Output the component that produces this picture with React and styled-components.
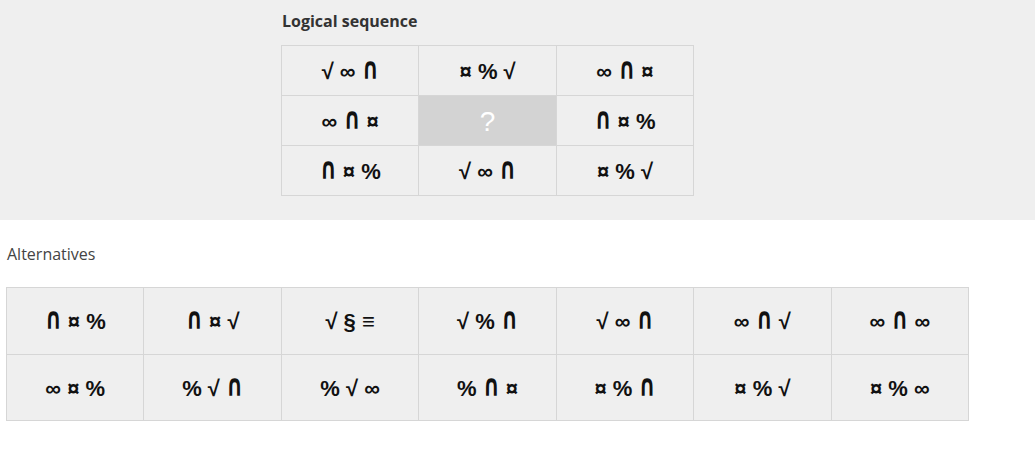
import React from 'react'
import styled, { createGlobalStyle } from 'styled-components'

const GlobalStyle = createGlobalStyle`
	body {
		margin: 0;
		background: #fff;
		font-family: 'Open Sans', 'Lato', sans-serif;
	}
`

const Question = styled.section`
	background: #efefef;
	padding: 11px 0 24px 281px;
`

const Title = styled.h3`
	margin: 0 0 14px 1px;
	font-size: 16px;
	font-weight: 700;
	color: #333;
	line-height: 20px;
`

const Grid = styled.div`
	display: grid;
	grid-template-columns: repeat(${p => p.cols}, ${p => p.cellWidth}px);
	grid-auto-rows: ${p => p.cellHeight}px;
	border-top: 1px solid #d6d6d6;
	border-left: 1px solid #d6d6d6;
	width: max-content;
`

const Cell = styled.div`
	display: flex;
	align-items: center;
	justify-content: center;
	padding-top: 3px;
	border-right: 1px solid #d6d6d6;
	border-bottom: 1px solid #d6d6d6;
	background: ${p => (p.blank ? '#d3d3d3' : '#efefef')};
	color: ${p => (p.blank ? '#fff' : '#111')};
	font-family: 'Liberation Sans', Arial, sans-serif;
	font-weight: ${p => (p.blank ? 400 : 700)};
	font-size: ${p => (p.blank ? 28 : 22)}px;
`

const Line = styled.span`
	white-space: pre;
`

const Cap = styled.span`
	display: inline-block;
	font-family: 'DejaVu Sans', sans-serif;
	font-weight: 700;
	font-size: 21px;
	transform: scaleY(1.45);
	transform-origin: 50% 80%;
`

const Answers = styled.section`
	padding: 24px 0 0 6px;
`

const Label = styled.div`
	margin: 0 0 23px 1px;
	font-size: 16px;
	color: #444;
	line-height: 20px;
`

const sequence = [
	'√∞∩', '¤%√', '∞∩¤',
	'∞∩¤', null, '∩¤%',
	'∩¤%', '√∞∩', '¤%√',
]

const alternatives = [
	'∩¤%', '∩¤√', '√§≡', '√%∩', '√∞∩', '∞∩√', '∞∩∞',
	'∞¤%', '%√∩', '%√∞', '%∩¤', '¤%∩', '¤%√', '¤%∞',
]

const Symbols = ({ text }) => (
	<Line>
		{[...text].map((c, i) => (
			<React.Fragment key={i}>
				{i > 0 && ' '}
				{c === '∩' ? <Cap>{c}</Cap> : c}
			</React.Fragment>
		))}
	</Line>
)

const App = () => (
	<>
		<GlobalStyle />
		<Question>
			<Title>Logical sequence</Title>
			<Grid cols={3} cellWidth={137.4} cellHeight={50}>
				{sequence.map((s, i) => (
					<Cell key={i} blank={s === null}>
						{s === null ? '?' : <Symbols text={s} />}
					</Cell>
				))}
			</Grid>
		</Question>
		<Answers>
			<Label>Alternatives</Label>
			<Grid cols={7} cellWidth={137.45} cellHeight={66.5}>
				{alternatives.map((s, i) => (
					<Cell key={i}><Symbols text={s} /></Cell>
				))}
			</Grid>
		</Answers>
	</>
)

export default App
